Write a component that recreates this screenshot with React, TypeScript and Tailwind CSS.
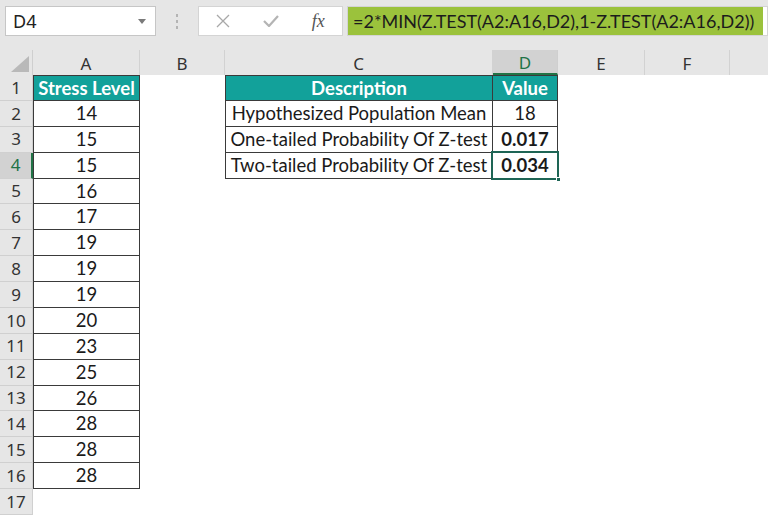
import type { ReactNode } from "react";

const cellFont = "font-['Lato','Liberation_Sans',sans-serif]";
const uiFont = "font-['Noto_Sans','Open_Sans',sans-serif]";

const stress = [14, 15, 15, 16, 17, 19, 19, 19, 20, 23, 25, 26, 28, 28, 28];

const summary = [
  { label: "Hypothesized Population Mean", value: "18", bold: false },
  { label: "One-tailed Probability Of Z-test", value: "0.017", bold: true },
  { label: "Two-tailed Probability Of Z-test", value: "0.034", bold: true },
];

const columns = [
  { key: "A", width: "w-[107px]" },
  { key: "B", width: "w-[85px]" },
  { key: "C", width: "w-[268px]" },
  { key: "D", width: "w-[65px]" },
  { key: "E", width: "w-[87px]" },
  { key: "F", width: "w-[85px]" },
];

function Cell({ className, children }: { className: string; children?: ReactNode }) {
  return <div className={`flex h-full shrink-0 items-center justify-center ${className}`}>{children}</div>;
}

function FormulaBar() {
  return (
    <div className="flex h-[50px] items-start bg-[#e6e6e6] pt-[6px]">
      <div className="ml-[5px] flex h-[30px] w-[151px] items-center justify-between border border-[#c6c6c6] bg-white pl-[7px] pr-[9px]">
        <span className={`${uiFont} text-[18px] text-[#222]`}>D4</span>
        <svg width="8" height="5" viewBox="0 0 8 5">
          <path d="M0 0h8L4 5z" fill="#7a7a7a" />
        </svg>
      </div>
      <div className="flex h-[30px] w-[42px] flex-col items-center justify-center gap-[3px]">
        <span className="h-[3px] w-[2px] bg-[#b4b4b4]" />
        <span className="h-[3px] w-[2px] bg-[#b4b4b4]" />
        <span className="h-[3px] w-[2px] bg-[#b4b4b4]" />
      </div>
      <div className="flex h-[30px] w-[145px] items-center border border-[#d4d4d4] bg-white">
        <div className="flex w-[48px] justify-center">
          <svg width="14" height="14" viewBox="0 0 14 14">
            <path d="M1 1l12 12M13 1L1 13" stroke="#a8a8a8" strokeWidth="1.3" />
          </svg>
        </div>
        <div className="flex w-[48px] justify-center">
          <svg width="16" height="12" viewBox="0 0 16 12">
            <path d="M1 6l5 5L15 1" stroke="#b4b4b4" strokeWidth="2.2" fill="none" />
          </svg>
        </div>
        <div className="flex w-[48px] justify-center">
          <span className="font-['Liberation_Serif',serif] text-[18px] italic text-[#555]">fx</span>
        </div>
      </div>
      <div className="ml-[4px] flex h-[30px] flex-1 border border-[#d4d4d4] bg-white">
        <div className="flex h-full w-[415px] items-center bg-[#9bc23c] pl-[5px]">
          <span className={`${cellFont} whitespace-nowrap text-[18px] text-[#1c1c1c]`}>
            =2*MIN(Z.TEST(A2:A16,D2),1-Z.TEST(A2:A16,D2))
          </span>
        </div>
      </div>
    </div>
  );
}

function ColumnHeaders() {
  return (
    <div className={`flex h-[25px] bg-[#e6e6e6] ${uiFont} text-[17px] text-[#333]`}>
      <div className="relative h-full w-[33px] shrink-0 border-r border-[#cfcfcf]">
        <svg className="absolute bottom-[3px] right-[3px]" width="18" height="16" viewBox="0 0 18 16">
          <path d="M18 0v16H0z" fill="#b9b9b9" />
        </svg>
      </div>
      {columns.map((c) => (
        <div
          key={c.key}
          className={`flex h-full shrink-0 items-center justify-center pt-[2px] ${c.width} ${
            c.key === "D"
              ? "border-b-2 border-r border-b-[#217346] border-r-[#cfcfcf] bg-[#d2d2d2] text-[#217346]"
              : "border-r border-[#d2d2d2]"
          }`}
        >
          {c.key}
        </div>
      ))}
      <div className="flex-1" />
    </div>
  );
}

function RowHeader({ n }: { n: number }) {
  const active = n === 4;
  return (
    <div
      className={`flex h-full w-[33px] shrink-0 items-center justify-center border-b ${uiFont} text-[17px] ${
        active
          ? "border-r-2 border-b-[#d0d0d0] border-r-[#217346] bg-[#d2d2d2] text-[#217346]"
          : "border-r border-[#d0d0d0] bg-[#e6e6e6] text-[#333]"
      }`}
    >
      {n}
    </div>
  );
}

export default function App() {
  const rows = Array.from({ length: 17 }, (_, i) => i + 1);

  return (
    <main className="h-[515px] w-[768px] overflow-hidden bg-[#e6e6e6]">
      <FormulaBar />
      <ColumnHeaders />
      <div className={`bg-white ${cellFont} text-[18.5px] text-[#1a1a1a]`}>
        {rows.map((n) => {
          const inA = n <= 16;
          const inCD = n <= 4;
          const head = n === 1;
          const s = n >= 2 && n <= 4 ? summary[n - 2] : null;
          const topA = head ? "border-t" : "";
          return (
            <div key={n} className="flex h-[25.875px]">
              <RowHeader n={n} />
              <Cell
                className={`w-[107px] pt-[1px] ${
                  inA
                    ? `border-b border-l border-r border-[#3a3a3a] ${topA} ${head ? "bg-[#12a19a] font-bold text-white" : ""}`
                    : ""
                }`}
              >
                {head ? "Stress Level" : inA ? stress[n - 2] : null}
              </Cell>
              <Cell className="w-[85px]" />
              <Cell
                className={`w-[268px] pt-[1px] ${
                  inCD
                    ? `border-b border-l border-r border-[#3a3a3a] ${topA} ${head ? "bg-[#12a19a] font-bold text-white" : ""}`
                    : ""
                }`}
              >
                {head ? "Description" : s?.label}
              </Cell>
              <Cell
                className={`relative w-[65px] pt-[1px] ${
                  inCD
                    ? `border-b border-r border-[#3a3a3a] ${topA} ${head ? "bg-[#12a19a] font-bold text-white" : ""}`
                    : ""
                } ${s?.bold ? "font-bold" : ""}`}
              >
                {head ? "Value" : s?.value}
                {n === 4 ? (
                  <>
                    <span className="absolute inset-[-2px] border-2 border-[#1e6555]" />
                    <span className="absolute bottom-[-4px] right-[-4px] h-[5px] w-[5px] border border-white bg-[#1e6555]" />
                  </>
                ) : null}
              </Cell>
              <Cell className="w-[87px]" />
              <Cell className="w-[85px]" />
              <div className="flex-1" />
            </div>
          );
        })}
      </div>
    </main>
  );
}
